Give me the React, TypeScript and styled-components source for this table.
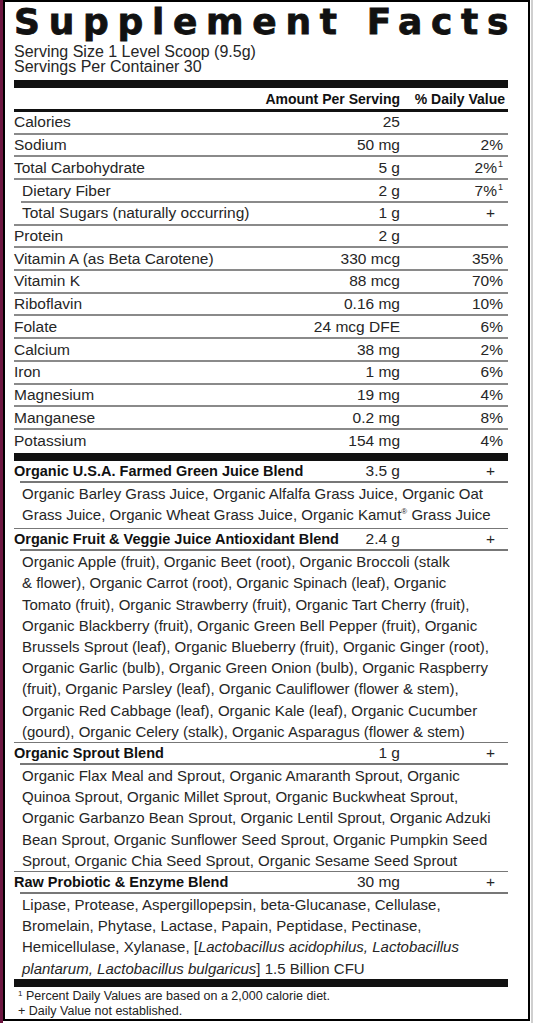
import React from "react";
import styled, { createGlobalStyle } from "styled-components";

// Styled Components
const GlobalStyle = createGlobalStyle`
  html, body {
    margin: 0;
    padding: 0;
    background: #fff;
  }
  body {
    font-family: "Liberation Sans", Arial, sans-serif;
    color: #262626;
  }
`;

const Page = styled.div`
  display: flex;
  width: 533px;
  height: 1023px;
  background: #fff;
`;

const Edge = styled.div`
  width: 3px;
  background: #6e1741;
`;

const RightEdge = styled.div`
  box-sizing: border-box;
  width: 3px;
  height: 1023px;
  border-right: 2px solid #cfcfcf;
`;

const Label = styled.div`
  box-sizing: border-box;
  width: 527px;
  height: 1021px;
  border: 2px solid #000;
  padding: 0 20px 0 9px;
  display: flex;
  flex-direction: column;
  overflow: hidden;
`;

const Title = styled.h1`
  margin: 0;
  font-family: "DejaVu Sans", sans-serif;
  font-weight: 700;
  font-size: 36px;
  line-height: 40px;
  letter-spacing: 8.7px;
  color: #111;
  white-space: nowrap;
  -webkit-text-stroke: 0.8px #111;
`;

const Serving = styled.div`
  margin-top: 2px;
  font-size: 16px;
  line-height: 15px;
`;

const ThickBar = styled.div<{ $gap: number }>`
  height: 8px;
  margin-top: ${(p) => p.$gap}px;
  background: #111;
  flex-shrink: 0;
`;

const Grid = styled.div`
  display: grid;
  grid-template-columns: minmax(0, 1fr) 150px 108px;
  align-items: center;
  box-sizing: border-box;
  white-space: nowrap;
  flex-shrink: 0;
`;

const HeaderRow = styled(Grid)`
  height: 24px;
  border-bottom: 3px solid #111;
  font-weight: 700;
  font-size: 14px;
  color: #111;
`;

const NutrientRow = styled(Grid)<{ $last?: boolean; $inset: number }>`
  height: 22.73px;
  padding-bottom: ${(p) => (p.$last ? 0 : 2)}px;
  font-size: 15.5px;
  background-image: ${(p) =>
    p.$last ? "none" : "linear-gradient(#8a8a8a, #8a8a8a)"};
  background-repeat: no-repeat;
  background-size: calc(100% - ${(p) => p.$inset}px) 2px;
  background-position: right bottom;
`;

const Name = styled.span<{ $indent?: boolean }>`
  padding-left: ${(p) => (p.$indent ? 8 : 0)}px;
`;

const Amount = styled.span`
  text-align: right;
`;

const Dv = styled.span<{ $pad: number }>`
  text-align: right;
  padding-right: ${(p) => p.$pad}px;
`;

const Sup = styled.sup`
  font-size: 9px;
  line-height: 0;
  vertical-align: 6px;
  margin-left: 1px;
`;

const Reg = styled.sup`
  font-size: 8px;
  line-height: 0;
  vertical-align: 6px;
`;

const BlendRow = styled(Grid)`
  height: 22px;
  padding-bottom: 2px;
  font-size: 15.5px;
  background-image: linear-gradient(#777, #777);
  background-repeat: no-repeat;
  background-size: calc(100% - 6px) 2px;
  background-position: right bottom;
`;

const BlendName = styled.span`
  font-weight: 700;
  font-size: 14.5px;
  color: #111;
  overflow: visible;
`;

const Ingredients = styled.div<{ $pad: number; $last?: boolean }>`
  padding-left: 8px;
  padding-bottom: ${(p) => p.$pad}px;
  border-bottom: ${(p) => (p.$last ? "none" : "1px solid #777")};
  font-size: 15px;
  line-height: 21.2px;
  flex-shrink: 0;
`;

const Line = styled.div`
  white-space: nowrap;
`;

const Footnotes = styled.div`
  padding: 2px 0 0 4px;
  font-size: 12.5px;
  line-height: 15px;
  color: #222;
`;

const FootSup = styled.sup`
  font-size: 8px;
  line-height: 0;
  vertical-align: 4px;
`;

type Nutrient = {
  name: string;
  amount: string;
  dv?: string;
  note?: boolean;
  indent?: boolean;
  inset?: boolean;
};

type Blend = {
  name: string;
  amount: string;
  lines: React.ReactNode[];
  pad?: number;
};

const nutrients: Nutrient[] = [
  { name: "Calories", amount: "25" },
  { name: "Sodium", amount: "50 mg", dv: "2%" },
  { name: "Total Carbohydrate", amount: "5 g", dv: "2%", note: true },
  { name: "Dietary Fiber", amount: "2 g", dv: "7%", note: true, indent: true, inset: true },
  { name: "Total Sugars (naturally occurring)", amount: "1 g", dv: "+", indent: true },
  { name: "Protein", amount: "2 g" },
  { name: "Vitamin A (as Beta Carotene)", amount: "330 mcg", dv: "35%" },
  { name: "Vitamin K", amount: "88 mcg", dv: "70%" },
  { name: "Riboflavin", amount: "0.16 mg", dv: "10%" },
  { name: "Folate", amount: "24 mcg DFE", dv: "6%" },
  { name: "Calcium", amount: "38 mg", dv: "2%" },
  { name: "Iron", amount: "1 mg", dv: "6%" },
  { name: "Magnesium", amount: "19 mg", dv: "4%" },
  { name: "Manganese", amount: "0.2 mg", dv: "8%" },
  { name: "Potassium", amount: "154 mg", dv: "4%" },
];

const blends: Blend[] = [
  {
    name: "Organic U.S.A. Farmed Green Juice Blend",
    amount: "3.5 g",
    pad: 3,
    lines: [
      "Organic Barley Grass Juice, Organic Alfalfa Grass Juice, Organic Oat",
      <>
        Grass Juice, Organic Wheat Grass Juice, Organic Kamut<Reg>®</Reg> Grass Juice
      </>,
    ],
  },
  {
    name: "Organic Fruit & Veggie Juice Antioxidant Blend",
    amount: "2.4 g",
    lines: [
      "Organic Apple (fruit), Organic Beet (root), Organic Broccoli (stalk",
      "& flower), Organic Carrot (root), Organic Spinach (leaf), Organic",
      "Tomato (fruit), Organic Strawberry (fruit), Organic Tart Cherry (fruit),",
      "Organic Blackberry (fruit), Organic Green Bell Pepper (fruit), Organic",
      "Brussels Sprout (leaf), Organic Blueberry (fruit), Organic Ginger (root),",
      "Organic Garlic (bulb), Organic Green Onion (bulb), Organic Raspberry",
      "(fruit), Organic Parsley (leaf), Organic Cauliflower (flower & stem),",
      "Organic Red Cabbage (leaf), Organic Kale (leaf), Organic Cucumber",
      "(gourd), Organic Celery (stalk), Organic Asparagus (flower & stem)",
    ],
  },
  {
    name: "Organic Sprout Blend",
    amount: "1 g",
    lines: [
      "Organic Flax Meal and Sprout, Organic Amaranth Sprout, Organic",
      "Quinoa Sprout, Organic Millet Sprout, Organic Buckwheat Sprout,",
      "Organic Garbanzo Bean Sprout, Organic Lentil Sprout, Organic Adzuki",
      "Bean Sprout, Organic Sunflower Seed Sprout, Organic Pumpkin Seed",
      "Sprout, Organic Chia Seed Sprout, Organic Sesame Seed Sprout",
    ],
  },
  {
    name: "Raw Probiotic & Enzyme Blend",
    amount: "30 mg",
    lines: [
      "Lipase, Protease, Aspergillopepsin, beta-Glucanase, Cellulase,",
      "Bromelain, Phytase, Lactase, Papain, Peptidase, Pectinase,",
      <>
        Hemicellulase, Xylanase, [<em>Lactobacillus acidophilus, Lactobacillus</em>
      </>,
      <>
        <em>plantarum, Lactobacillus bulgaricus</em>] 1.5 Billion CFU
      </>,
    ],
  },
];

const App: React.FC = () => {
  return (
    <>
      <GlobalStyle />
      <Page>
        <Edge />
        <Label>
          <Title>Supplement Facts</Title>
          <Serving>
            <div>Serving Size 1 Level Scoop (9.5g)</div>
            <div>Servings Per Container 30</div>
          </Serving>
          <ThickBar $gap={6} />
          <HeaderRow>
            <span />
            <Amount>Amount Per Serving</Amount>
            <Dv $pad={3}>% Daily Value</Dv>
          </HeaderRow>
          {nutrients.map((n, i) => (
            <NutrientRow
              key={n.name}
              $last={i === nutrients.length - 1}
              $inset={n.inset ? 7 : 0}
            >
              <Name $indent={n.indent}>{n.name}</Name>
              <Amount>{n.amount}</Amount>
              <Dv $pad={n.dv === "+" ? 13 : 5}>
                {n.dv}
                {n.note && <Sup>1</Sup>}
              </Dv>
            </NutrientRow>
          ))}
          <ThickBar $gap={0} />
          {blends.map((b, i) => (
            <React.Fragment key={b.name}>
              <BlendRow>
                <BlendName>{b.name}</BlendName>
                <Amount>{b.amount}</Amount>
                <Dv $pad={13}>+</Dv>
              </BlendRow>
              <Ingredients $pad={b.pad ?? 0} $last={i === blends.length - 1}>
                {b.lines.map((line, j) => (
                  <Line key={j}>{line}</Line>
                ))}
              </Ingredients>
            </React.Fragment>
          ))}
          <ThickBar $gap={0} />
          <Footnotes>
            <div>
              <FootSup>1</FootSup> Percent Daily Values are based on a 2,000 calorie diet.
            </div>
            <div>+ Daily Value not established.</div>
          </Footnotes>
        </Label>
        <RightEdge />
      </Page>
    </>
  );
};

export default App;
